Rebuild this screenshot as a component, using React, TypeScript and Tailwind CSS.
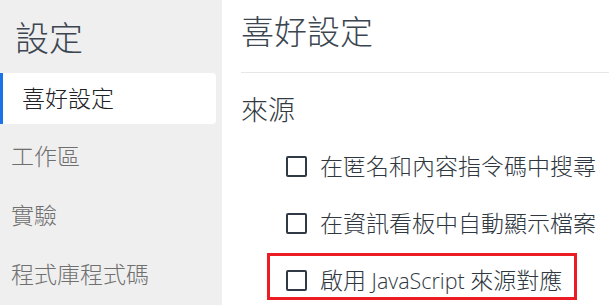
import { useState } from "react";

const font = { fontFamily: '"Open Sans", "Noto Sans CJK TC", sans-serif' };

const navItems = ["工作區", "實驗", "程式庫程式碼"];

const options = [
	{ id: "anon", label: <>在匿名和內容指令碼中搜尋</> },
	{ id: "drawer", label: <>在資訊看板中自動顯示檔案</> },
	{
		id: "sourcemap",
		label: (
			<>
				啟用<span className="text-[21.5px]"> JavaScript </span>來源對應
			</>
		),
		marked: true,
	},
];

export default function App() {
	const [checked, setChecked] = useState<Record<string, boolean>>({});

	return (
		<div className="flex h-[305px] w-[609px] overflow-hidden bg-white" style={font}>
			{/* sidebar */}
			<aside className="w-[222px] shrink-0 bg-[#efefef]">
				<h1 className="pl-[15px] pt-[18px] text-[34px] leading-[40px] font-light text-[#3b4650]">設定</h1>
				<div className="mt-[15px] flex h-[51px] w-[216px] items-center rounded-r-[4px] border-l-[3px] border-[#1a73e8] bg-white pl-[19px] text-[23px] font-light text-[#202124]">
					喜好設定
				</div>
				<div className="mt-[3px]">
					{navItems.map((item) => (
						<div key={item} className="flex h-[59px] items-center pl-[11px] text-[23px] font-light text-[#6f6f6f]">
							{item}
						</div>
					))}
				</div>
			</aside>

			{/* main panel */}
			<main className="flex-1 pl-[19px]">
				<h2 className="pt-[12px] text-[33px] leading-[40px] font-light text-[#3b4650]">喜好設定</h2>
				<div className="mt-[20px] h-px bg-[#e6e6e6]" />
				<h3 className="mt-[20px] text-[27px] leading-[34px] font-light text-[#333a41]">來源</h3>
				<div className="mt-[11px]">
					{options.map((opt) => (
						<label key={opt.id} className="relative flex h-[57px] items-center gap-[13px] pl-[45px] cursor-pointer">
							<input
								type="checkbox"
								className="peer sr-only"
								checked={!!checked[opt.id]}
								onChange={() => setChecked((c) => ({ ...c, [opt.id]: !c[opt.id] }))}
							/>
							<span className="h-[21px] w-[21px] shrink-0 rounded-[2px] border-2 border-[#2f3a44] bg-white" />
							<span className="text-[23px] font-light text-[#2f3740] whitespace-nowrap">{opt.label}</span>
							{opt.marked && (
								<span className="pointer-events-none absolute left-[26px] top-[1px] h-[47px] w-[310px] border-[3px] border-[#ec1c24]" />
							)}
						</label>
					))}
				</div>
			</main>
		</div>
	);
}
